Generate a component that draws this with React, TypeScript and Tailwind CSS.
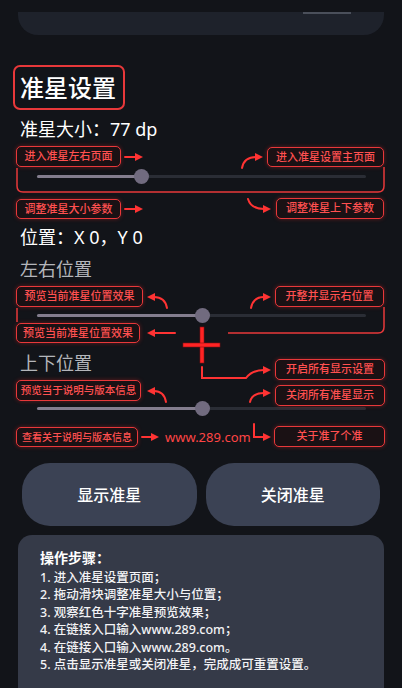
import React from "react";

type Note = {
  text: string;
  x: number;
  y: number;
  w: number;
  h: number;
  size?: string;
};

const notes: Note[] = [
  { text: "进入准星左右页面", x: 16, y: 146, w: 105, h: 21 },
  { text: "进入准星设置主页面", x: 267, y: 147, w: 117, h: 20 },
  { text: "调整准星大小参数", x: 16, y: 199, w: 105, h: 20 },
  { text: "调整准星上下参数", x: 276, y: 198, w: 108, h: 21 },
  { text: "预览当前准星位置效果", x: 16, y: 286, w: 127, h: 21 },
  { text: "开整并显示右位置", x: 275, y: 286, w: 109, h: 21 },
  { text: "预览当前准星位置效果", x: 16, y: 323, w: 124, h: 20 },
  { text: "开启所有显示设置", x: 275, y: 359, w: 110, h: 21 },
  { text: "预览当于说明与版本信息", x: 16, y: 380, w: 125, h: 21, size: "text-[10.5px]" },
  { text: "关闭所有准星显示", x: 275, y: 385, w: 110, h: 21 },
  { text: "查看关于说明与版本信息", x: 16, y: 427, w: 122, h: 20, size: "text-[10px]" },
  { text: "关于准了个准", x: 274, y: 426, w: 111, h: 21 },
];

const steps = [
  "1. 进入准星设置页面；",
  "2. 拖动滑块调整准星大小与位置；",
  "3. 观察红色十字准星预览效果；",
  "4. 在链接入口输入www.289.com；",
  "4. 在链接入口输入www.289.com。",
  "5. 点击显示准星或关闭准星，完成成可重置设置。",
];

const right = (x: number, y: number) => `${x},${y} ${x - 8},${y - 4} ${x - 8},${y + 4}`;
const left = (x: number, y: number) => `${x},${y} ${x + 8},${y - 4} ${x + 8},${y + 4}`;

const Slider = ({ value }: { value: number }) => {
  return (
    <div className="relative ml-[37px] w-[329px] h-[14px] flex items-center">
      <div className="w-full h-[3px] rounded-full bg-[#2a2d35]" />
      <div
        className="absolute left-0 h-[3px] rounded-full bg-[#837d8e]"
        style={{ width: `${value * 100}%` }}
      />
      <div
        className="absolute top-0 w-[15px] h-[15px] -ml-[7px] rounded-full bg-[#716b7f]"
        style={{ left: `${value * 100}%` }}
      />
    </div>
  );
};

const Callouts = () => {
  return (
    <svg
      className="absolute inset-0 pointer-events-none"
      width="402"
      height="688"
      viewBox="0 0 402 688"
    >
      <g fill="none" stroke="#ff3333" strokeWidth="2" strokeLinecap="round">
        <path d="M125 157H137" />
        <path d="M242 168Q244 157 256 157" />
        <path d="M125 209H137" />
        <path d="M248 199Q251 209 264 209" />
        <path d="M167 308Q165 297 154 297" />
        <path d="M251 308Q253 297 264 297" />
        <path d="M175 333H154" />
        <path d="M202 367V378H246Q252 370 264 370" />
        <path d="M166 402Q164 391 154 391" />
        <path d="M250 402Q252 393 264 393" />
        <path d="M142 437H152" />
        <path d="M254 424V437H264" />
      </g>
      <g fill="none" stroke="#e8383a" strokeWidth="1.5">
        <path d="M17 168V186Q17 192 23 192H378Q384 192 384 186V167" />
        <path d="M17 308V322" />
        <path d="M384 307V327Q384 333 378 333H228" />
      </g>
      <g fill="#ff3333">
        <polygon points={right(143, 157)} />
        <polygon points={right(263, 157)} />
        <polygon points={right(143, 209)} />
        <polygon points={right(271, 209)} />
        <polygon points={left(147, 297)} />
        <polygon points={right(271, 297)} />
        <polygon points={left(147, 333)} />
        <polygon points={right(271, 370)} />
        <polygon points={left(147, 391)} />
        <polygon points={right(271, 393)} />
        <polygon points={right(159, 437)} />
        <polygon points={right(271, 437)} />
      </g>
      {/* crosshair preview */}
      <g fill="#ff2424" stroke="#8a0f12" strokeWidth="0.6">
        <rect x="200" y="327" width="4" height="36" />
        <rect x="183" y="343" width="37" height="4" />
      </g>
    </svg>
  );
};

export default function App() {
  return (
    <div
      className="relative w-full h-[688px] overflow-hidden bg-[#121419] text-white"
      style={{ fontFamily: '"Noto Sans", "Noto Sans CJK SC", sans-serif' }}
    >
      <div className="mt-[12px] mx-[18px] h-[23px] rounded-b-[20px] bg-[#1e222b] relative">
        <div className="absolute right-[33px] top-0 w-[48px] h-[2px] bg-[#4a4f5a]" />
      </div>

      <div className="mt-[30px] ml-[13px] w-[112px] h-[45px] rounded-[7px] border-2 border-[#e8383a] flex items-center pl-[5px] text-[24px] font-medium">
        准星设置
      </div>

      <div className="mt-[7px] pl-[20px] h-[24px] leading-[24px] text-[18px]">准星大小：77 dp</div>

      <div className="mt-[28px]">
        <Slider value={0.316} />
      </div>

      <div className="mt-[42px] pl-[20px] h-[24px] leading-[24px] text-[18px]">
        位置：X 0，Y 0
      </div>
      <div className="mt-[8px] pl-[20px] h-[24px] leading-[24px] text-[18px] text-[#b4b6bb]">左右位置</div>

      <div className="mt-[27px]">
        <Slider value={0.5} />
      </div>

      <div className="mt-[29px] pl-[20px] h-[24px] leading-[24px] text-[18px] text-[#b4b6bb]">上下位置</div>

      <div className="mt-[26px]">
        <Slider value={0.5} />
      </div>

      <div className="mt-[48px] px-[22px] flex gap-[9px]">
        <button className="w-[175px] h-[63px] rounded-[28px] bg-[#3b4254] text-[16px] font-medium">显示准星</button>
        <button className="w-[175px] h-[63px] rounded-[28px] bg-[#3b4254] text-[16px] font-medium">关闭准星</button>
      </div>

      <div className="mt-[9px] mx-[18px] h-[170px] rounded-[14px] bg-[#353a48] pt-[14px] pl-[22px]">
        <div className="text-[14px] leading-[18px] font-bold mb-[2px]">操作步骤：</div>
        {steps.map((s, i) => (
          <div key={i} className="text-[12.5px] leading-[17.4px] font-medium text-[#f3f3f5]">
            {s}
          </div>
        ))}
      </div>

      <Callouts />

      {notes.map((n, i) => (
        <div
          key={i}
          className={`absolute flex items-center justify-center rounded-[5px] border-[1.5px] border-[#e8383a] bg-[#1a1114] font-medium text-[#ff5050] shadow-[0_0_4px_rgba(255,40,40,0.35)] ${n.size ?? "text-[11px]"}`}
          style={{ left: n.x, top: n.y, width: n.w, height: n.h }}
        >
          {n.text}
        </div>
      ))}

      <div className="absolute left-[165px] top-[428px] h-[18px] leading-[18px] text-[13px] text-[#ff4545]">
        www.289.com
      </div>
    </div>
  );
}
